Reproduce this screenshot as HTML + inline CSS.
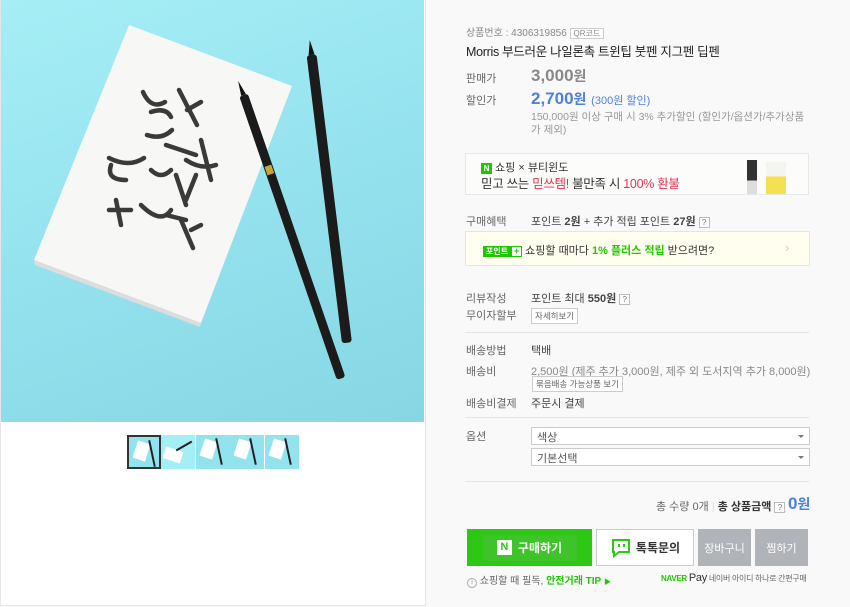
<!DOCTYPE html>
<html><head><meta charset="utf-8"><style>
*{margin:0;padding:0;box-sizing:border-box}
body{width:850px;height:607px;overflow:hidden;background:#f9f9f9;font-family:"Liberation Sans","Noto Sans CJK KR",sans-serif;position:relative;color:#333}
.a{position:absolute;white-space:nowrap}
.lbl{font-size:11px;color:#666}
.v{font-size:11px;color:#444}
.th{position:absolute;top:435px;width:34px;height:34px;background:#93e3ee;overflow:hidden}
.th i{position:absolute;left:6px;top:5px;width:13px;height:18px;background:#fff;transform:rotate(18deg)}
.th b{position:absolute;left:22px;top:3px;width:2px;height:27px;background:#222;transform:rotate(-12deg)}
.btn{position:absolute;top:529px;height:37px;font-size:12px;display:flex;align-items:center;justify-content:center}
.sel{position:absolute;left:531px;width:279px;height:18px;background:#fff;border:1px solid #ccc;font-size:11px;color:#555;padding:1px 5px}
.sel:after{content:"";position:absolute;right:5px;top:7px;border:3px solid transparent;border-top:3px solid #777}
.q{display:inline-block;width:11px;height:11px;border:1px solid #bbb;font-size:8px;text-align:center;line-height:9px;color:#777;background:#fff;vertical-align:middle}
</style></head><body>
<div class="a" style="left:0;top:0;width:426px;height:606px;background:#fff;border:1px solid #e6e6e6;border-top:0"></div>
<div class="a" style="left:1px;top:0;width:423px;height:422px;background:linear-gradient(160deg,#a6eef6 0%,#94e2ee 50%,#86d6e4 100%)"></div>
<svg class="a" style="left:1px;top:0" width="423" height="422">
<polygon points="128,25 291,86 200,323 33,260" fill="#f7f7f5"/>
<polygon points="33,260 200,323 199,327 34,265" fill="#ddd"/>
<g fill="none" stroke="#3a3a3a" stroke-width="4.5" stroke-linecap="round">
<path d="M142 92 q8 18 22 10 M150 112 q15 -5 20 5 M178 90 l18 35 M186 110 l14 -8"/>
<path d="M146 135 q15 5 25 -5 M165 145 l30 10 M200 140 l10 40 M185 160 q15 10 30 5"/>
<path d="M108 158 q20 10 35 0 M110 165 q-5 15 15 15 M150 170 q10 10 20 0 M175 175 l10 30 M195 175 l-10 25"/>
<path d="M115 200 l5 25 M108 210 l22 0 M140 205 q20 20 30 5 M165 215 l20 5 M180 220 l12 28 M190 230 l10 -5"/>
</g>
<g transform="rotate(-19 242 95)"><rect x="238" y="95" width="9" height="300" rx="3" fill="#1b1b1b"/><polygon points="240,95 242,80 245,95" fill="#111"/><rect x="239" y="170" width="7" height="9" fill="#c9a23a"/></g>
<g transform="rotate(-7 309 42)"><rect x="304" y="55" width="10" height="290" rx="3" fill="#1b1b1b"/><polygon points="306,55 309,40 312,55" fill="#111"/></g>
</svg>
<div class="th" style="left:127px;border:2px solid #333"><i></i><b></b></div>
<div class="th" style="left:161px;background:#a4eef6"><i style="top:14px;left:3px;width:18px;height:12px"></i><b style="left:22px;top:2px;height:18px;transform:rotate(60deg)"></b></div>
<div class="th" style="left:196px"><i></i><b></b></div>
<div class="th" style="left:230px"><i></i><b></b></div>
<div class="th" style="left:265px"><i></i><b></b></div>

<div class="a" style="left:466px;top:24px;font-size:10px;color:#888">상품번호 : 4306319856 <span style="border:1px solid #ccc;font-size:8px;padding:0 3px;background:#fff">QR코드</span></div>
<div class="a" style="left:466px;top:41px;font-size:12.5px;color:#222;letter-spacing:-0.3px">Morris 부드러운 나일론촉 트윈팁 붓펜 지그펜 딥펜</div>
<div class="a lbl" style="left:466px;top:70px">판매가</div>
<div class="a" style="left:531px;top:66px;font-size:17px;font-weight:bold;color:#888">3,000<span style="font-size:14px">원</span></div>
<div class="a lbl" style="left:466px;top:92px">할인가</div>
<div class="a" style="left:531px;top:89px;font-size:17px;font-weight:bold;color:#4d7fe0">2,700<span style="font-size:14px">원</span> <span style="font-size:11px;font-weight:normal">(300원 할인)</span></div>
<div class="a" style="left:531px;top:111px;font-size:10.5px;color:#999;line-height:13px">150,000원 이상 구매 시 3% 추가할인 (할인가/옵션가/추가상품<br>가 제외)</div>
<div class="a" style="left:465px;top:153px;width:344px;height:42px;background:#fcfcfa;border:1px solid #e8e8e8"></div>
<div class="a" style="left:481px;top:159px;font-size:11px;color:#333"><span style="display:inline-block;width:11px;height:11px;background:#1ec800;color:#fff;font-size:8px;font-weight:bold;text-align:center;line-height:11px;vertical-align:middle">N</span> 쇼핑 × 뷰티윈도</div>
<div class="a" style="left:481px;top:173px;font-size:12.5px;color:#333;letter-spacing:-0.3px">믿고 쓰는 <span style="color:#e0344e">믿쓰템!</span> 불만족 시 <span style="color:#e0344e">100% 환불</span></div>
<div class="a" style="left:747px;top:160px;width:10px;height:34px;background:linear-gradient(#333 60%,#ddd 60%)"></div>
<div class="a" style="left:766px;top:162px;width:20px;height:32px;background:linear-gradient(#f4f4f0 45%,#f5e050 45%)"></div>

<div class="a lbl" style="left:466px;top:213px">구매혜택</div>
<div class="a v" style="left:531px;top:213px">포인트 <b>2원</b> + 추가 적립 포인트 <b>27원</b> <span class="q">?</span></div>
<div class="a" style="left:465px;top:231px;width:345px;height:35px;background:#fffeef;border:1px solid #e6e6dc"></div>
<div class="a" style="left:483px;top:242px;font-size:11px;color:#333"><span style="display:inline-block;background:#1ec800;color:#fff;font-size:8px;font-weight:bold;padding:0 3px;line-height:11px;vertical-align:middle">포인트</span><span style="display:inline-block;border:1px solid #1ec800;color:#1ec800;font-size:9px;font-weight:bold;width:11px;line-height:9px;text-align:center;vertical-align:middle;background:#fff">+</span> 쇼핑할 때마다 <b style="color:#1ec800">1% 플러스 적립</b> 받으려면?</div>
<div class="a" style="left:785px;top:240px;font-size:13px;color:#ccc">›</div>

<div class="a lbl" style="left:466px;top:290px">리뷰작성</div>
<div class="a v" style="left:531px;top:290px">포인트 최대 <b>550원</b> <span class="q">?</span></div>
<div class="a lbl" style="left:466px;top:307px">무이자할부</div>
<div class="a" style="left:531px;top:308px;font-size:8.5px;color:#666;border:1px solid #ccc;background:#fff;padding:1px 3px">자세히보기</div>
<div class="a" style="left:465px;top:332px;width:344px;height:1px;background:#e5e5e5"></div>
<div class="a lbl" style="left:466px;top:342px">배송방법</div>
<div class="a v" style="left:531px;top:342px">택배</div>
<div class="a lbl" style="left:466px;top:363px">배송비</div>
<div class="a" style="left:531px;top:363px;font-size:11px;color:#888">2,500원 (제주 추가 3,000원, 제주 외 도서지역 추가 8,000원)</div>
<div class="a" style="left:532px;top:376px;font-size:8.5px;color:#666;border:1px solid #ccc;background:#fff;padding:1px 3px">묶음배송 가능상품 보기</div>
<div class="a lbl" style="left:466px;top:395px">배송비결제</div>
<div class="a v" style="left:531px;top:395px">주문시 결제</div>
<div class="a" style="left:465px;top:417px;width:344px;height:1px;background:#e5e5e5"></div>
<div class="a lbl" style="left:466px;top:428px">옵션</div>
<div class="sel" style="top:427px">색상</div>
<div class="sel" style="top:448px">기본선택</div>
<div class="a" style="left:465px;top:481px;width:344px;height:1px;background:#e5e5e5"></div>
<div class="a" style="left:656px;top:498px;font-size:11px;color:#666">총 수량 0개 <span style="color:#ddd">|</span> <b style="color:#333">총 상품금액</b> <span class="q">?</span></div>
<div class="a" style="left:788px;top:494px;font-size:17px;font-weight:bold;color:#4d7fe0">0<span style="font-size:14px">원</span></div>

<div class="btn" style="left:467px;width:125px;background:#2dc814;color:#fff;font-weight:bold"><div style="background:#3ec42a;width:94px;height:26px;display:flex;align-items:center;justify-content:center"><span style="background:#fff;color:#2dc814;width:15px;height:15px;font-size:11px;text-align:center;line-height:15px;margin-right:6px">N</span>구매하기</div></div>
<div class="btn" style="left:596px;width:98px;background:#fff;border:1px solid #ccc;color:#333;font-weight:bold"><svg width="22" height="22" viewBox="0 0 22 22" style="margin-right:4px"><path d="M3 3h16v12H9l-5 4v-4H3z" fill="none" stroke="#2dc814" stroke-width="2"/><rect x="8" y="7" width="2" height="3" fill="#2dc814"/><rect x="13" y="7" width="2" height="3" fill="#2dc814"/></svg>톡톡문의</div>
<div class="btn" style="left:698px;width:53px;background:#b0b3b8;color:#fff;font-size:11px">장바구니</div>
<div class="btn" style="left:755px;width:53px;background:#b0b3b8;color:#fff;font-size:11px">찜하기</div>
<div class="a" style="left:467px;top:572px;font-size:10px;color:#666"><span style="display:inline-block;width:10px;height:10px;border:1px solid #aaa;border-radius:50%;font-size:7px;text-align:center;line-height:8px;color:#999">i</span> 쇼핑할 때 필독, <b style="color:#1ec800">안전거래 TIP</b> <span style="color:#1ec800;font-size:7px">▶</span></div>
<div class="a" style="left:661px;top:572px;font-size:8px;color:#666;letter-spacing:-0.3px"><b style="color:#1ec800;font-size:8px">NAVER</b> <span style="font-size:11px;color:#333">Pay</span> 네이버 아이디 하나로 간편구매</div>
</body></html>
